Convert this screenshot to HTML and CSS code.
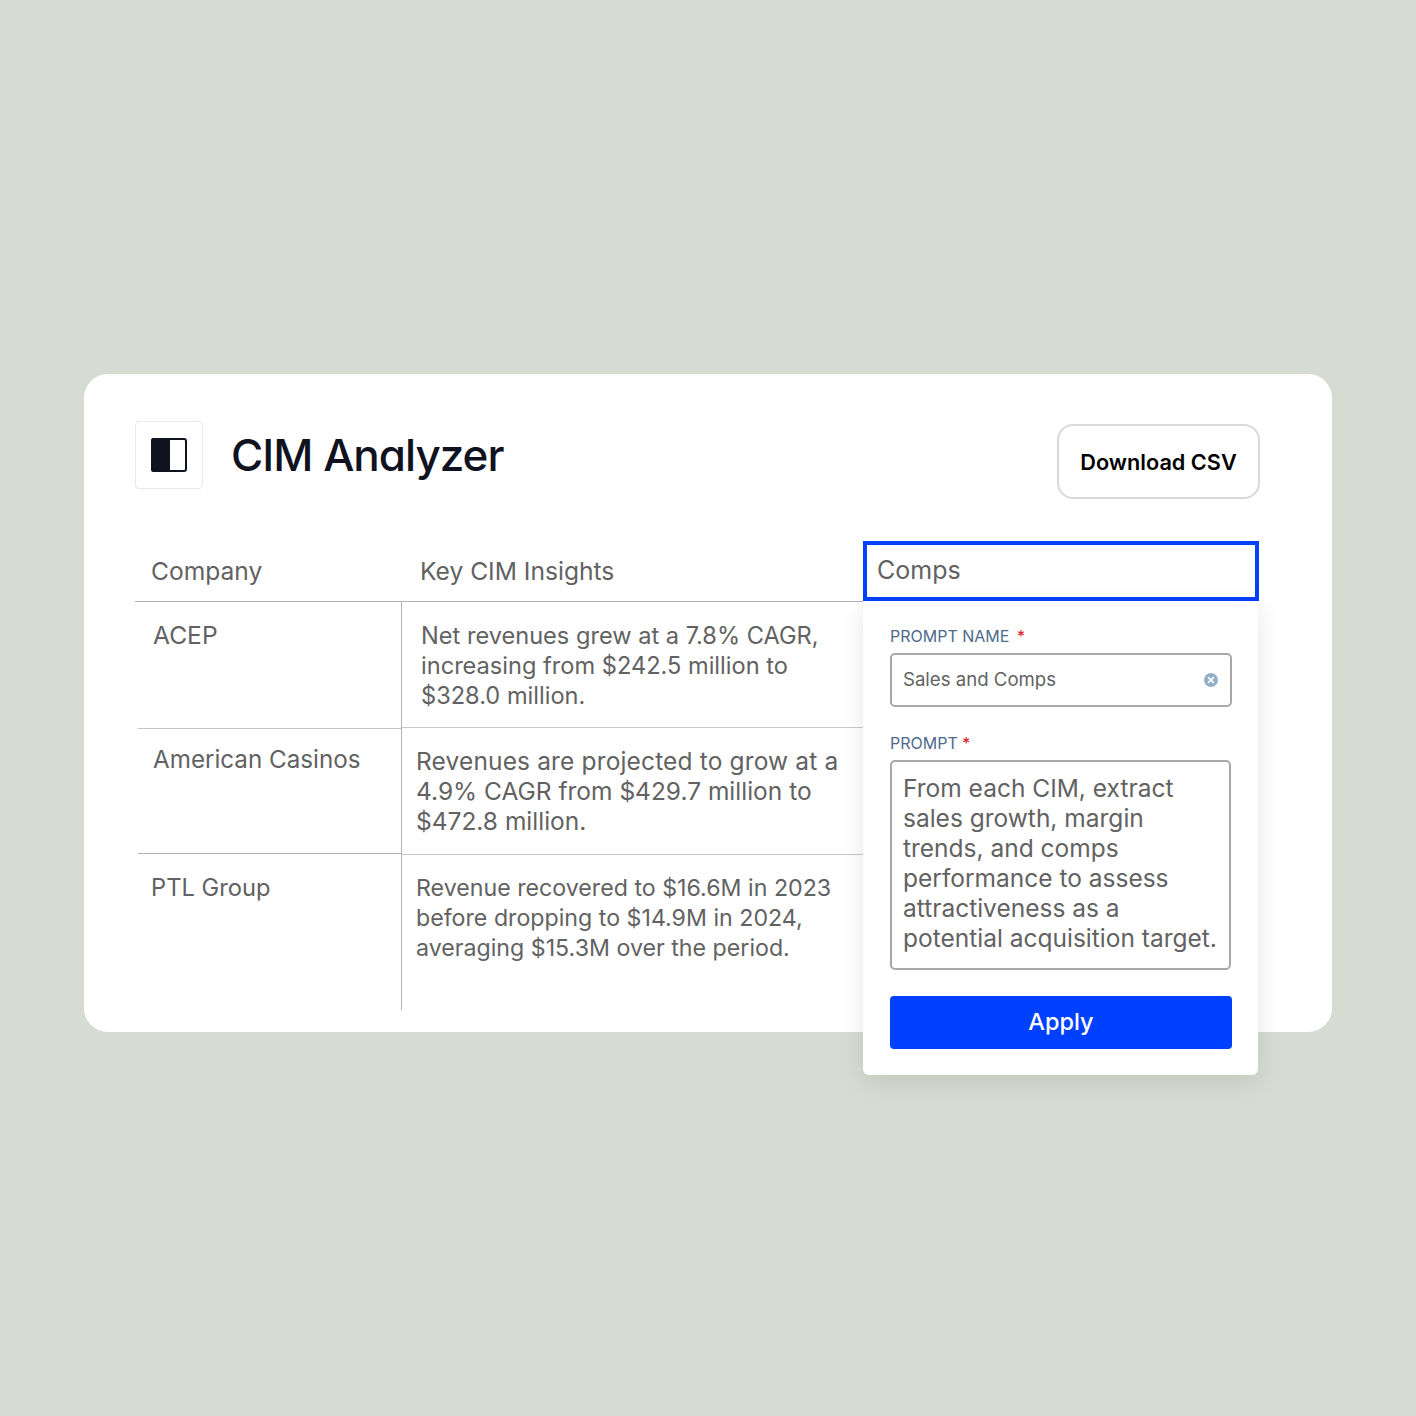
FILE: index.html
```html
<!DOCTYPE html>
<html lang="en">
<head>
    <meta charset="UTF-8">
    <meta name="viewport" content="width=device-width, initial-scale=1.0">
    <title>CIM Analyzer</title>
    <link rel="stylesheet" href="styles.css">
</head>
<body>
    <div class="card">
        <div class="card-header">
            <div class="title-group">
                <div class="logo-box">
                    <svg width="36" height="34" viewBox="0 0 36 34">
                        <rect x="1" y="1" width="34" height="32" rx="2" fill="#fff" stroke="#10131f" stroke-width="2"/>
                        <path d="M3 0H19V34H3A3 3 0 0 1 0 31V3A3 3 0 0 1 3 0Z" fill="#10131f"/>
                    </svg>
                </div>
                <h1>CIM Analyzer</h1>
            </div>
            <button class="download-btn">Download CSV</button>
        </div>

        <div class="table">
            <div class="col col-company">
                <div class="col-head">Company</div>
                <div class="cell cell-acep">ACEP</div>
                <div class="cell cell-american">American Casinos</div>
                <div class="cell cell-ptl">PTL Group</div>
            </div>
            <div class="col col-insights">
                <div class="col-head">Key CIM Insights</div>
                <div class="col-body">
                    <div class="cell cell-first">Net revenues grew at a 7.8% CAGR, increasing from $242.5 million to $328.0 million.</div>
                    <div class="cell cell-second">Revenues are projected to grow at a 4.9% CAGR from $429.7 million to $472.8 million.</div>
                    <div class="cell cell-third">Revenue recovered to $16.6M in 2023 before dropping to $14.9M in 2024, averaging $15.3M over the period.</div>
                </div>
            </div>
        </div>

        <!-- Column header with its prompt editor, sits over the card edge -->
        <div class="comps">
            <div class="comps-head">Comps</div>
            <form class="prompt-panel">
                <label class="field-label field-label-name">PROMPT NAME <span class="req">*</span></label>
                <div class="name-input">
                    <span>Sales and Comps</span>
                    <svg width="14" height="14" viewBox="0 0 14 14">
                        <circle cx="7" cy="7" r="7" fill="#93b0cb"/>
                        <path d="M4.6 4.6L9.4 9.4M9.4 4.6L4.6 9.4" stroke="#fff" stroke-width="1.6" stroke-linecap="round"/>
                    </svg>
                </div>
                <label class="field-label field-label-prompt">PROMPT <span class="req">*</span></label>
                <div class="prompt-input">From each CIM, extract sales growth, margin trends, and comps performance to assess attractiveness as a potential acquisition target.</div>
                <button type="button" class="apply-btn">Apply</button>
            </form>
        </div>
    </div>
</body>
</html>
```

FILE: styles.css
```css
body {
    font-family: Inter, "Liberation Sans", sans-serif;
    background-color: #d7dcd2;
    margin: 0;
    padding: 374px 84px 0;
    height: 1416px;
    box-sizing: border-box;
}
.card {
    position: relative;
    box-sizing: border-box;
    height: 658px;
    background: #fff;
    border-radius: 24px;
    padding: 47px 72px 0 51px;
}
.card-header {
    display: flex;
    justify-content: space-between;
}
.title-group {
    display: flex;
    align-items: center;
    gap: 28px;
    height: 68px;
}
.logo-box {
    box-sizing: border-box;
    width: 68px;
    height: 68px;
    border: 1px solid #e9e9e9;
    border-radius: 4px;
    display: flex;
    align-items: center;
    justify-content: center;
}
h1 {
    margin: 0;
    font-size: 44px;
    font-weight: 500;
    letter-spacing: -1px;
    color: #10131f;
    font-feature-settings: "cv11" 1;
}
.download-btn {
    box-sizing: border-box;
    width: 203px;
    height: 75px;
    margin-top: 3px;
    background: #fff;
    border: 2px solid #d9d9d9;
    border-radius: 16px;
    font-family: Inter, sans-serif;
    font-size: 21.7px;
    font-weight: 600;
    color: #000;
    cursor: pointer;
}
.table {
    display: flex;
    margin-top: 43px;
    color: #626262;
    font-size: 24.6px;
}
.col-company {
    width: 266px;
}
.col-insights {
    width: 462px;
}
.col-body {
    height: 408px;
    border-left: 1px solid #b3b3b3;
}
.col-head {
    height: 60px;
    box-sizing: border-box;
    padding-top: 13px;
    line-height: 32px;
    border-bottom: 1px solid #b3b3b3;
}
.col-company .col-head {
    padding-left: 16px;
}
.col-insights .col-head {
    padding-left: 19px;
}
.cell {
    box-sizing: border-box;
    line-height: 30px;
}
.col-company .cell {
    margin-left: 3px;
    padding-left: 15px;
    line-height: 32px;
}
.cell-acep {
    height: 127px;
    padding-top: 17px;
    border-bottom: 1px solid #c4c4c4;
}
.col-company .cell-american {
    height: 125px;
    padding-top: 15px;
    font-size: 24.2px;
    border-bottom: 1px solid #b3b3b3;
}
.col-company .cell-ptl {
    padding-top: 18px;
    padding-left: 13px;
    font-size: 23.7px;
}
.cell-first {
    height: 126px;
    padding: 19px 30px 0 19px;
    font-size: 23.6px;
    border-bottom: 1px solid #c9c9c9;
}
.cell-second {
    height: 127px;
    padding: 18px 14px 0 14px;
    font-size: 24.5px;
    border-bottom: 1px solid #c9c9c9;
}
.cell-second::first-line {
    letter-spacing: 0.15px;
}
.cell-third {
    padding: 18px 20px 0 14px;
    font-size: 23.2px;
}
.comps {
    position: absolute;
    left: 779px;
    top: 167px;
    width: 396px;
}
.comps-head {
    box-sizing: border-box;
    height: 60px;
    border: 4px solid #0040ff;
    padding: 10px 10px;
    line-height: 30px;
    font-size: 25px;
    color: #626262;
}
.prompt-panel {
    box-sizing: border-box;
    width: 395px;
    height: 474px;
    background: #fff;
    border-radius: 0 0 6px 6px;
    box-shadow: 0 6px 24px rgba(0, 0, 0, 0.1);
    padding: 25px 26px 0 27px;
    display: flex;
    flex-direction: column;
}
.field-label {
    font-size: 16px;
    line-height: 20px;
    color: #4d6a8c;
}
.field-label-name .req {
    margin-left: 3px;
}
.req {
    color: #e0101c;
}
.name-input {
    box-sizing: border-box;
    height: 54px;
    margin-top: 7px;
    padding: 0 12px 3px 11px;
    border: 2px solid #a8a8a8;
    border-radius: 5px;
    display: flex;
    justify-content: space-between;
    align-items: center;
    font-size: 18.6px;
    color: #626262;
}
.name-input svg {
    margin-top: 2px;
}
.field-label-prompt {
    margin-top: 26px;
}
.prompt-input {
    box-sizing: border-box;
    width: 341px;
    height: 210px;
    margin-top: 7px;
    padding: 11px 8px 0 11px;
    border: 2px solid #a8a8a8;
    border-radius: 5px;
    font-size: 24.5px;
    line-height: 30px;
    color: #626262;
}
.apply-btn {
    width: 342px;
    height: 53px;
    margin-top: 26px;
    padding-bottom: 3px;
    background-color: #0040ff;
    color: #fff;
    border: none;
    border-radius: 4px;
    font-family: Inter, sans-serif;
    font-size: 23.5px;
    font-weight: 500;
    cursor: pointer;
}
```
